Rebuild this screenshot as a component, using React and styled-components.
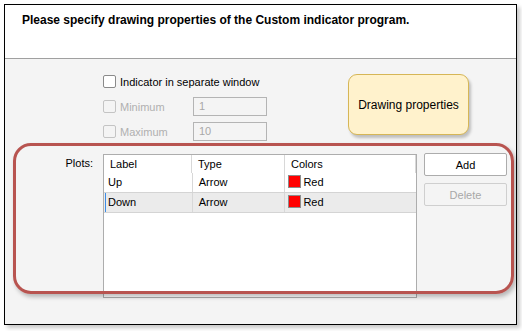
import React from "react";
import styled, { createGlobalStyle } from "styled-components";

const GlobalStyle = createGlobalStyle`
  html, body {
    margin: 0;
    padding: 0;
    background: #ffffff;
  }
  body {
    font-family: "Liberation Sans", Arial, sans-serif;
    font-size: 11px;
    color: #000;
  }
`;

const plots = [
  { label: "Up", type: "Arrow", color: "Red", selected: false },
  { label: "Down", type: "Arrow", color: "Red", selected: true },
];

function App() {
  return (
    <Page>
      <GlobalStyle />
      <Window>
        <Header>
          <Title>Please specify drawing properties of the Custom indicator program.</Title>
        </Header>
        <Body>
          <CheckRow>
            <CheckBox />
            <CheckLabel>Indicator in separate window</CheckLabel>
          </CheckRow>
          <CheckRow disabled>
            <CheckBox disabled />
            <CheckLabel disabled fixed>Minimum</CheckLabel>
            <NumberField>1</NumberField>
          </CheckRow>
          <CheckRow disabled>
            <CheckBox disabled />
            <CheckLabel disabled fixed>Maximum</CheckLabel>
            <NumberField>10</NumberField>
          </CheckRow>

          <PlotsRow>
            <PlotsLabel>Plots:</PlotsLabel>
            <Table>
              <HeadRow>
                <HeadCell w={88}>Label</HeadCell>
                <HeadCell w={93}>Type</HeadCell>
                <HeadCell w={131}>Colors</HeadCell>
              </HeadRow>
              {plots.map((p) => (
                <DataRow key={p.label} selected={p.selected}>
                  <Cell w={88} first selected={p.selected}>{p.label}</Cell>
                  <Cell w={93}>{p.type}</Cell>
                  <Cell w={131} last>
                    <Swatch />
                    {p.color}
                  </Cell>
                </DataRow>
              ))}
            </Table>
            <Buttons>
              <Button>Add</Button>
              <Button disabled>Delete</Button>
            </Buttons>
          </PlotsRow>
        </Body>

        <Callout>Drawing properties</Callout>
        <Highlight />
      </Window>
    </Page>
  );
}

export default App;

const Page = styled.div`
  padding: 4px 0 0 4px;
  width: 522px;
  height: 331px;
  box-sizing: border-box;
`;

const Window = styled.div`
  position: relative;
  width: 513px;
  height: 321px;
  box-sizing: border-box;
  border: 1px solid #000;
  background: #f4f4f4;
  box-shadow: 3px 3px 4px rgba(0, 0, 0, 0.22);
  display: flex;
  flex-direction: column;
`;

const Header = styled.div`
  height: 54px;
  background: #fff;
  border-bottom: 1px solid #a0a0a0;
  padding: 8px 0 0 17px;
  box-sizing: border-box;
`;

const Title = styled.div`
  font-weight: bold;
  font-size: 12px;
`;

const Body = styled.div`
  flex: 1;
  padding: 10px 0 0 98px;
  display: flex;
  flex-direction: column;
`;

const CheckRow = styled.div`
  display: flex;
  align-items: center;
  height: 25px;
`;

const CheckBox = styled.span`
  width: 11px;
  height: 11px;
  border: 1px solid ${(p) => (p.disabled ? "#c4c4c4" : "#8a8a8a")};
  border-radius: 2px;
  background: ${(p) => (p.disabled ? "#f4f4f4" : "#fff")};
  margin-right: 4px;
  flex-shrink: 0;
`;

const CheckLabel = styled.span`
  color: ${(p) => (p.disabled ? "#b0b0b0" : "#000")};
  width: ${(p) => (p.fixed ? "73px" : "auto")};
`;

const NumberField = styled.div`
  width: 74px;
  height: 19px;
  box-sizing: border-box;
  border: 1px solid #b4b4b4;
  padding: 2px 5px;
  color: #a8a8a8;
`;

const PlotsRow = styled.div`
  display: flex;
  margin: 10px 0 0 -98px;
`;

const PlotsLabel = styled.div`
  width: 88px;
  text-align: right;
  padding-top: 3px;
  margin-right: 10px;
`;

const Table = styled.div`
  width: 314px;
  height: 144px;
  box-sizing: border-box;
  border: 1px solid #adadad;
  background: #fff;
`;

const HeadRow = styled.div`
  display: flex;
  height: 18px;
`;

const HeadCell = styled.div`
  width: ${(p) => p.w}px;
  box-sizing: border-box;
  border-right: 1px solid #d8d8d8;
  padding: 3px 0 0 6px;
`;

const DataRow = styled.div`
  display: flex;
  height: ${(p) => (p.selected ? "21px" : "19px")};
  box-sizing: border-box;
  background: ${(p) => (p.selected ? "#ebebeb" : "#fff")};
  border-top: ${(p) => (p.selected ? "1px solid #d4d4d4" : "none")};
  border-bottom: ${(p) => (p.selected ? "1px solid #d4d4d4" : "none")};
`;

const Cell = styled.div`
  width: ${(p) => p.w}px;
  box-sizing: border-box;
  border-right: ${(p) => (p.last ? "none" : "1px solid #d8d8d8")};
  border-left: ${(p) => (p.first && p.selected ? "1px solid #3c8ce6" : "none")};
  padding: 3px 0 0 ${(p) => (p.first && !p.selected ? "3px" : p.first ? "2px" : "6px")};
  display: flex;
  align-items: flex-start;
  gap: 2px;
  margin-left: ${(p) => (p.first ? "1px" : "0")};
`;

const Swatch = styled.span`
  width: 11px;
  height: 11px;
  background: #ff0000;
  border: 1px solid #8c8c8c;
  margin-left: -3px;
  margin-top: -1px;
`;

const Buttons = styled.div`
  display: flex;
  flex-direction: column;
  gap: 7px;
  margin: -1px 0 0 7px;
`;

const Button = styled.div`
  width: 83px;
  height: 23px;
  box-sizing: border-box;
  border: 1px solid ${(p) => (p.disabled ? "#cfcfcf" : "#acacac")};
  border-radius: 2px;
  background: ${(p) => (p.disabled ? "#f4f4f4" : "#fff")};
  color: ${(p) => (p.disabled ? "#a8a8a8" : "#000")};
  display: flex;
  align-items: center;
  justify-content: center;
`;

const Callout = styled.div`
  position: absolute;
  left: 343px;
  top: 69px;
  width: 121px;
  height: 61px;
  box-sizing: border-box;
  background: #fff2cc;
  border: 1px solid #d6b656;
  border-radius: 9px;
  box-shadow: 2px 3px 3px rgba(0, 0, 0, 0.22);
  display: flex;
  align-items: center;
  justify-content: center;
  font-family: "Liberation Sans", Arial, sans-serif;
  font-size: 12px;
`;

const Highlight = styled.div`
  position: absolute;
  left: 8px;
  top: 138px;
  width: 501px;
  height: 151px;
  box-sizing: border-box;
  border: 3px solid #b85450;
  border-radius: 18px;
  box-shadow: 2px 3px 4px rgba(0, 0, 0, 0.25);
  pointer-events: none;
`;
